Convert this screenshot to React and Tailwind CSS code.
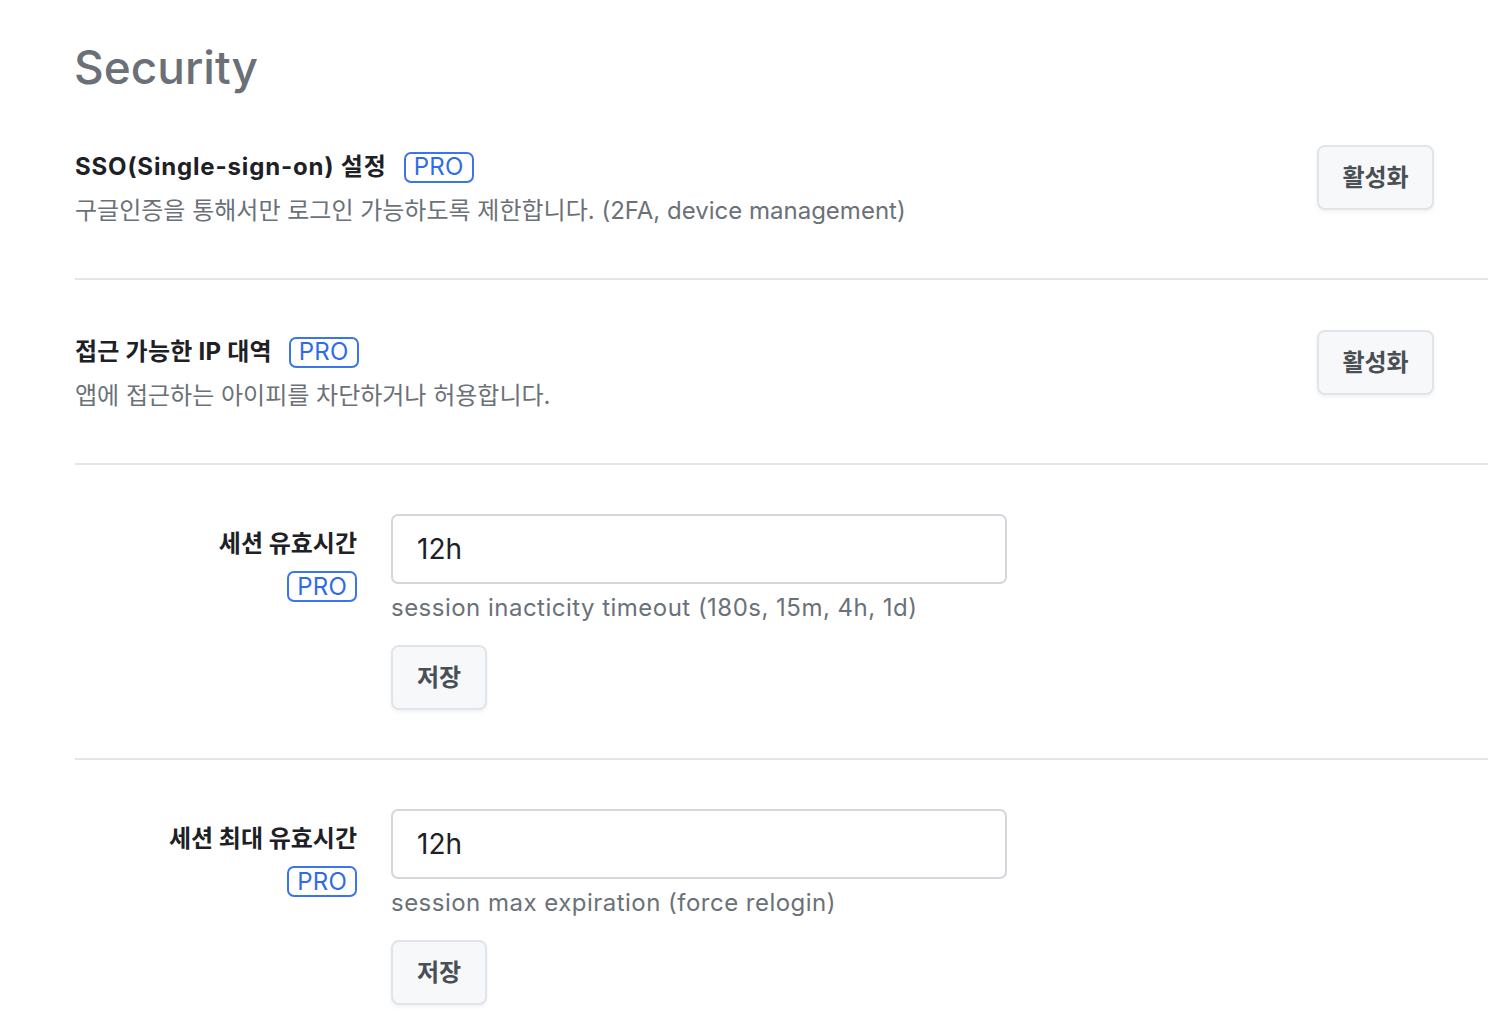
import React, { useState } from "react";

const font = { fontFamily: '"Inter", "Noto Sans CJK KR", sans-serif' };

const Pro = () => (
  <span className="inline-flex h-[31px] items-center rounded-[7px] border-2 border-[#3a74ee] px-[8px] text-[24px] leading-none tracking-[0.01em] text-[#2f6be8]">
    PRO
  </span>
);

const GrayButton = ({ children, className = "" }) => (
  <button
    className={`h-[65px] rounded-[8px] border-2 border-[#e1e4e8] bg-[#f7f8fa] text-[24px] font-bold text-[#4a4f55] shadow-[0_2px_4px_rgba(0,0,0,0.06)] ${className}`}
  >
    {children}
  </button>
);

const ToggleRow = ({ title, desc, wide }) => (
  <div className="ml-[75px] border-b-2 border-[#e3e6e9] pt-[50px] pb-[51px] pr-[54px]">
    <div className="flex items-start justify-between">
      <div className="pt-[6px]">
        <div className="flex h-[32px] items-center gap-[17px]">
          <span className={`text-[24px] font-bold text-[#1d2125] ${wide ? "tracking-[0.035em]" : "tracking-[0.01em]"}`}>
            {title}
          </span>
          <Pro />
        </div>
        <p className="mt-[12px] h-[32px] text-[24px] leading-[32px] text-[#6b7178]">{desc}</p>
      </div>
      <GrayButton className="w-[117px]">활성화</GrayButton>
    </div>
  </div>
);

const InputRow = ({ label, help, last }) => {
  const [val, setVal] = useState("12h");
  return (
    <div className={`ml-[75px] pt-[49px] pb-[48px] ${last ? "" : "border-b-2 border-[#e3e6e9]"}`}>
      <div className="flex gap-[34px]">
        <div className="flex w-[282px] flex-col items-end pt-[14px]">
          <span className="h-[32px] text-[24px] font-bold leading-[32px] text-[#1d2125]">{label}</span>
          <div className="mt-[11px]">
            <Pro />
          </div>
        </div>
        <div className="flex flex-col items-start">
          <input
            value={val}
            onChange={(e) => setVal(e.target.value)}
            className="h-[70px] w-[616px] rounded-[7px] border-2 border-[#d3d7db] px-[24px] text-[28px] text-[#1d2125] outline-none"
          />
          <p className="mt-[8px] h-[32px] text-[24px] leading-[32px] tracking-[0.02em] text-[#6b7178]">{help}</p>
          <GrayButton className="mt-[21px] w-[96px]">저장</GrayButton>
        </div>
      </div>
    </div>
  );
};

export default function App() {
  return (
    <div className="min-h-screen bg-white" style={font}>
      <h1 className="pl-[74px] pt-[39px] text-[46px] font-medium leading-[56px] text-[#6b7078]">Security</h1>
      <ToggleRow
        wide
        title="SSO(Single-sign-on) 설정"
        desc="구글인증을 통해서만 로그인 가능하도록 제한합니다. (2FA, device management)"
      />
      <ToggleRow title="접근 가능한 IP 대역" desc="앱에 접근하는 아이피를 차단하거나 허용합니다." />
      <InputRow label="세션 유효시간" help="session inacticity timeout (180s, 15m, 4h, 1d)" />
      <InputRow label="세션 최대 유효시간" help="session max expiration (force relogin)" last />
    </div>
  );
}
